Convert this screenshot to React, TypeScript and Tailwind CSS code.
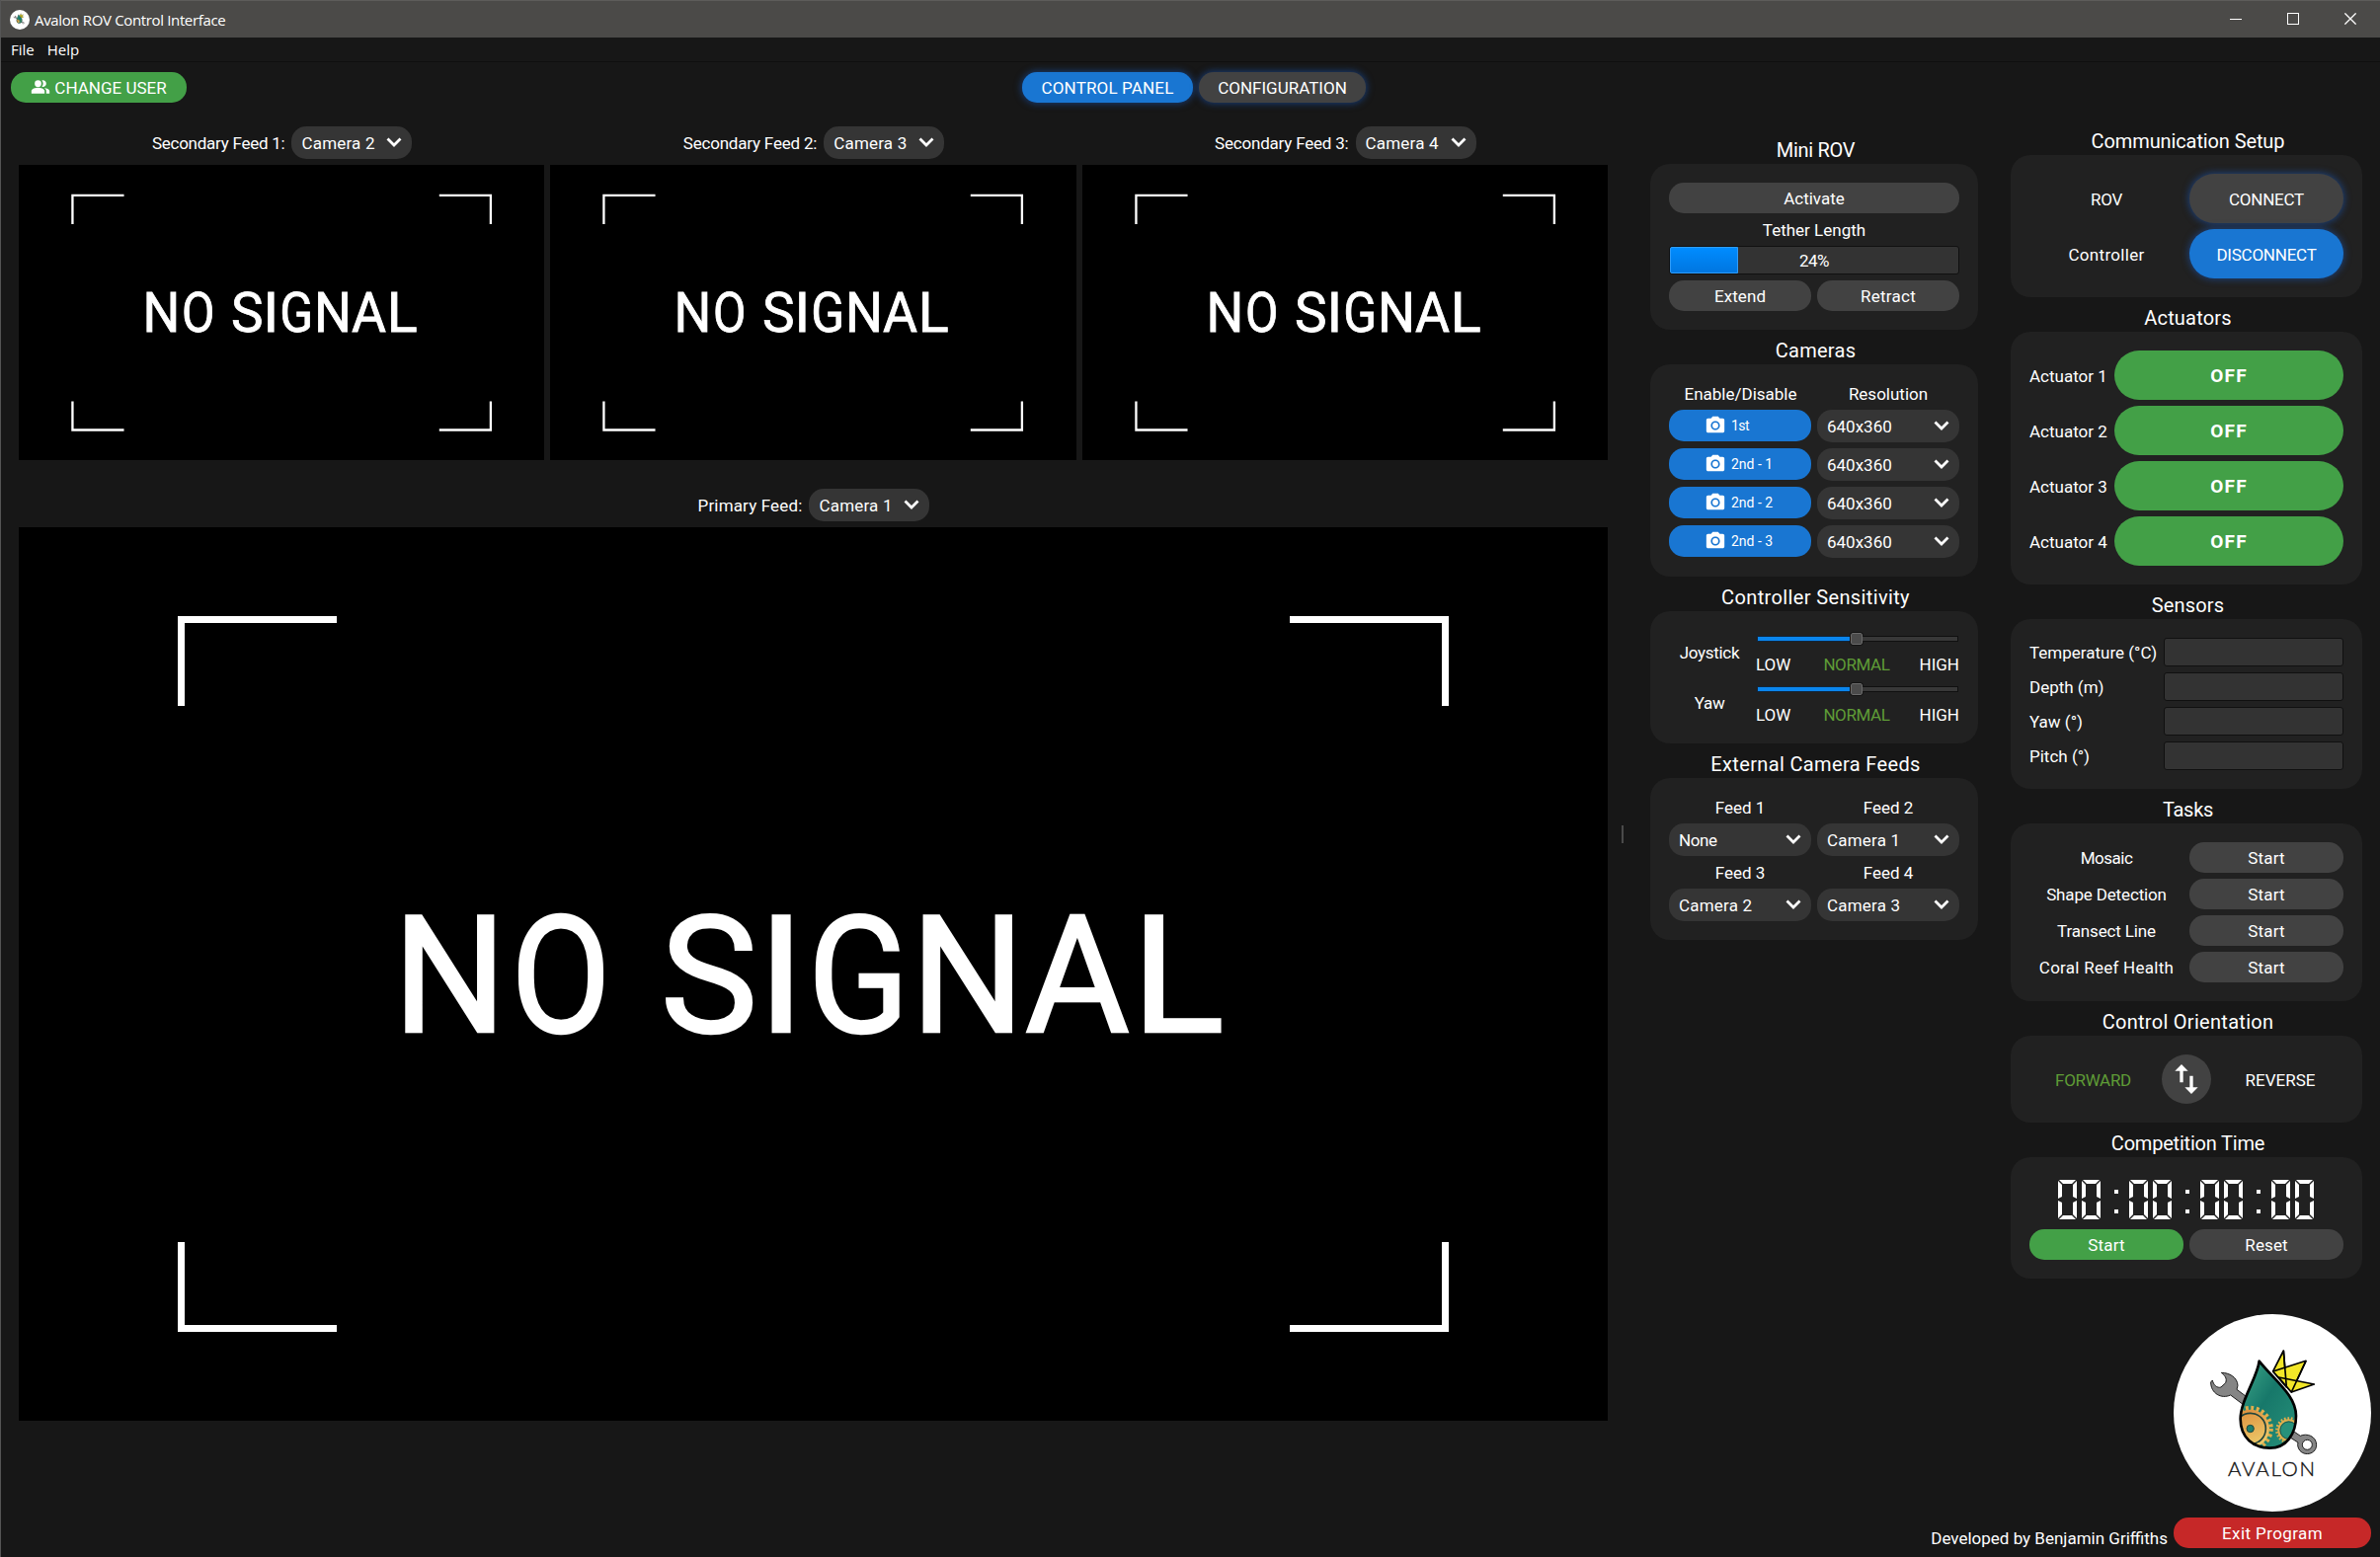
import React from "react";
import clsx from "clsx";
import { MdImportExport, MdPeopleAlt, MdPhotoCamera } from "react-icons/md";

function Emblem({ className, caption }: { className: string; caption?: boolean }) {
  return (
    <svg viewBox="0 0 200 200" className={className} aria-label="Avalon">
      <circle cx="100" cy="100" r="100" fill="#fff" />
      <defs>
        <clipPath id={caption ? "drop-lg" : "drop-sm"}>
          <path d="M203 86 C198 135 146 205 146 262 C146 318 185 350 235 350 C285 350 315 308 315 252 C315 190 250 145 203 86 Z" />
        </clipPath>
        <linearGradient id="teal" x1="0" y1="0" x2="1" y2="1">
          <stop offset="0" stopColor="#3fa88a" />
          <stop offset="0.45" stopColor="#17786a" />
          <stop offset="1" stopColor="#27917a" />
        </linearGradient>
        <linearGradient id="brass" x1="0" y1="0" x2="0.4" y2="1">
          <stop offset="0" stopColor="#dd8a3a" />
          <stop offset="1" stopColor="#ecc768" />
        </linearGradient>
      </defs>
      <g transform="translate(19 19) scale(0.3333)">
        <g fill="#858585" stroke="#1c1c1c" strokeWidth="3" strokeLinejoin="round">
          <path d="M88 121 C112 121 137 135 138 160 L135 172 L175 202 L160 222 L116 189 C88 202 56 184 56 150 L61 144 C64 158 75 169 87 165 L101 152 C106 138 99 130 88 121 Z" />
          <path d="M300 294 L328 313 C347 304 377 313 377 341 C376 375 324 378 320 341 L321 333 L294 316 Z" />
          <circle cx="349" cy="340" r="15" fill="#fff" />
        </g>
        <path
          d="M203 86 C198 135 146 205 146 262 C146 318 185 350 235 350 C285 350 315 308 315 252 C315 190 250 145 203 86 Z"
          fill="url(#teal)"
        />
        <g clipPath={caption ? "url(#drop-lg)" : "url(#drop-sm)"}>
          <circle cx="176" cy="291" r="63" fill="none" stroke="#e0ae4c" strokeWidth="13" strokeDasharray="8.5 8" />
          <circle cx="176" cy="291" r="58" fill="url(#brass)" />
          <circle cx="176" cy="291" r="47" fill="none" stroke="#22443c" strokeWidth="5" />
          <circle cx="176" cy="291" r="11" fill="#1d7f6e" stroke="#22443c" strokeWidth="3" />
          <circle cx="293" cy="296" r="36" fill="none" stroke="#e0ae4c" strokeWidth="9" strokeDasharray="5 5.3" />
          <circle cx="293" cy="296" r="31" fill="none" stroke="#e0ae4c" strokeWidth="6" />
          <circle cx="293" cy="296" r="26" fill="#27917a" stroke="#22443c" strokeWidth="2" />
        </g>
        <path
          d="M203 86 C198 135 146 205 146 262 C146 318 185 350 235 350 C285 350 315 308 315 252 C315 190 250 145 203 86 Z"
          fill="none"
          stroke="#000"
          strokeWidth="8"
          strokeLinejoin="round"
        />
        <g fill="#f2e628" stroke="#000" strokeWidth="5" strokeLinejoin="round">
          <path d="M245 117 L277 54 L286 165 Z" />
          <path d="M245 117 L345 85 L301 180 Z" />
          <path d="M262 135 L370 156 L301 180 Z" />
          <path d="M277 54 L286 165" />
          <path d="M345 85 L301 180" />
        </g>
      </g>
      {caption && (
        <text
          x="55"
          y="163.8"
          textLength="88"
          fontSize="20.5"
          fill="#111"
          stroke="#111"
          strokeWidth="0.35"
          className="font-['Lato'] font-light"
        >
          AVALON
        </text>
      )}
    </svg>
  );
}

/** Idle frame shown while a camera has no stream. */
function NoSignal() {
  return (
    <svg viewBox="0 0 1609 905" className="block w-full bg-black">
      <g fill="none" stroke="#fff" strokeWidth="7">
        <path d="M322 93.5 H164.5 V181" />
        <path d="M1287 93.5 H1444.5 V181" />
        <path d="M322 811.5 H164.5 V724" />
        <path d="M1287 811.5 H1444.5 V724" />
      </g>
      <g fill="#fff" stroke="#fff" strokeWidth="2.4" fontSize="166" className="font-['Roboto']">
        <text y="511.2">
          <tspan x="379.2" textLength="114.4" lengthAdjust="spacingAndGlyphs">N</tspan>
          <tspan x="498.4" textLength="100.9" lengthAdjust="spacingAndGlyphs">O</tspan>{" "}
          <tspan x="649.8" textLength="98.4" lengthAdjust="spacingAndGlyphs">S</tspan>
          <tspan x="748.2" textLength="47.5" lengthAdjust="spacingAndGlyphs">I</tspan>
          <tspan x="799" textLength="102.6" lengthAdjust="spacingAndGlyphs">G</tspan>
          <tspan x="903.4" textLength="114.8" lengthAdjust="spacingAndGlyphs">N</tspan>
          <tspan x="1019" textLength="105.8" lengthAdjust="spacingAndGlyphs">A</tspan>
          <tspan x="1127" textLength="93.6" lengthAdjust="spacingAndGlyphs">L</tspan>
        </text>
      </g>
    </svg>
  );
}

function Combo({ value, className }: { value: string; className?: string }) {
  return (
    <button
      className={clsx(
        "flex h-[33px] items-center justify-between rounded-[15px] bg-[#353535] pr-[10px] pl-[10px] text-left",
        className,
      )}
    >
      <span>{value}</span>
      <svg viewBox="0 0 16 10" className="-mt-px h-[10px] w-[16px]" fill="none" stroke="#fff" strokeWidth="2.8">
        <path d="M1.5 1.5 L8 8 L14.5 1.5" />
      </svg>
    </button>
  );
}

function Pill({ children, className }: { children: React.ReactNode; className?: string }) {
  return (
    <button className={clsx("flex h-[31px] items-center justify-center rounded-[15px]", className)}>{children}</button>
  );
}

function Label({ children, className }: { children: React.ReactNode; className?: string }) {
  return <div className={clsx("flex h-[21px] items-center justify-center", className)}>{children}</div>;
}

function Section({
  title,
  tracking,
  className,
  children,
}: {
  title: string;
  tracking?: string;
  className?: string;
  children: React.ReactNode;
}) {
  return (
    <section>
      <h2 className={clsx("flex h-[35px] items-center justify-center pt-[7px] pl-[3px] text-[20px]", tracking)}>{title}</h2>
      <div className={clsx("rounded-[20px] bg-[#212121] p-[19px]", className)}>{children}</div>
    </section>
  );
}

function Feed({ label, value, tracking }: { label: string; value: string; tracking?: string }) {
  return (
    <div>
      <div className="mb-[6px] flex items-center justify-center gap-[7px] pl-px">
        <span className={tracking}>{label}</span>
        <Combo value={value} className="w-[122px] tracking-[0.2px]" />
      </div>
      <NoSignal />
    </div>
  );
}

function Sensitivity({ name }: { name: string }) {
  return (
    <div className="grid grid-cols-[83px_205px] gap-x-[6px]">
      <div className="flex items-center justify-center pt-px pr-px tracking-[-0.3px]">{name}</div>
      <div>
        <div className="mb-[6px] flex h-[18px] items-center">
          <div className="h-[6px] w-[95px] rounded-[1px] border border-r-0 border-[#10263c] bg-[#0a86ee]" />
          <div className="h-[12px] w-[12px] rounded-[2px] border border-[#6a6a6a] bg-[#4b4b4b] outline outline-[#141414]" />
          <div className="h-[6px] w-[97px] rounded-[1px] border border-l-0 border-[#101010] bg-[#383838]" />
        </div>
        <div className="-ml-px flex h-[21px] items-center justify-between">
          <span>LOW</span>
          <span className="ml-[3px] tracking-[-0.4px] text-[#5f9c36]">NORMAL</span>
          <span>HIGH</span>
        </div>
      </div>
    </div>
  );
}

function Digit() {
  const seg = "absolute bg-white ";
  return (
    <span className="relative block h-[40px] w-[19px]">
      <i className={seg + "top-0 left-[1px] h-[4px] w-[17px] [clip-path:polygon(0_0,100%_0,calc(100%-4px)_100%,4px_100%)]"} />
      <i className={seg + "top-[1px] left-0 h-[18px] w-[4px] [clip-path:polygon(0_0,100%_4px,100%_calc(100%-2px),0_100%)]"} />
      <i className={seg + "top-[1px] right-0 h-[18px] w-[4px] [clip-path:polygon(100%_0,0_4px,0_calc(100%-2px),100%_100%)]"} />
      <i className={seg + "bottom-[1px] left-0 h-[18px] w-[4px] [clip-path:polygon(0_0,100%_2px,100%_calc(100%-4px),0_100%)]"} />
      <i className={seg + "right-0 bottom-[1px] h-[18px] w-[4px] [clip-path:polygon(100%_0,0_2px,0_calc(100%-4px),100%_100%)]"} />
      <i className={seg + "bottom-0 left-[1px] h-[4px] w-[17px] [clip-path:polygon(4px_0,calc(100%-4px)_0,100%_100%,0_100%)]"} />
    </span>
  );
}

function Clock() {
  return (
    <div role="timer" aria-label="00:00:00:00" className="mb-[6px] flex h-[48px] items-center pl-[29px]">
      {[0, 1, 2, 3].map((group) => (
        <React.Fragment key={group}>
          {group > 0 && (
            <span className="mr-[11px] ml-[14px] flex h-[40px] w-[4px] flex-col pt-[10px]">
              <i className="mb-[16px] h-[4px] bg-white" />
              <i className="h-[4px] bg-white" />
            </span>
          )}
          <span className="flex gap-[5px]">
            <Digit />
            <Digit />
          </span>
        </React.Fragment>
      ))}
    </div>
  );
}

const glow = "shadow-[0_0_7px_1px_rgba(25,90,190,0.55)]";

const cameras = ["1st", "2nd - 1", "2nd - 2", "2nd - 3"];
const actuators = ["Actuator 1", "Actuator 2", "Actuator 3", "Actuator 4"];
const sensors = ["Temperature (°C)", "Depth (m)", "Yaw (°)", "Pitch (°)"];
const tasks = [
  { name: "Mosaic", tracking: "tracking-[-0.5px]" },
  { name: "Shape Detection", tracking: "tracking-[-0.15px]" },
  { name: "Transect Line", tracking: "tracking-[-0.15px]" },
  { name: "Coral Reef Health", tracking: "tracking-[0.26px]" },
];

export default function App() {
  return (
    <div className="flex h-[1577px] w-[2410px] flex-col overflow-hidden border-l border-[#555] bg-[#171717] font-['Roboto',sans-serif] text-[17px] leading-[20px] whitespace-nowrap text-white">
      <header className="flex h-[38px] shrink-0 items-center border-t border-[#5d5c5a] bg-[#4b4a48] pl-[9px] font-['Open_Sans',sans-serif] text-[15px]">
        <Emblem className="h-[20px] w-[20px]" />
        <span className="ml-[5px] flex-1 tracking-[-0.35px]">Avalon ROV Control Interface</span>
        <div className="mb-px flex items-center gap-[46px] pr-[24px]">
          <span className="h-px w-[12px] bg-white" />
          <span className="h-[12px] w-[12px] border border-white" />
          <svg viewBox="0 0 12 12" className="h-[12px] w-[12px]" stroke="#fff" strokeWidth="1.3">
            <path d="M0.4 0.4 L11.6 11.6 M11.6 0.4 L0.4 11.6" />
          </svg>
        </div>
      </header>

      <nav className="flex h-[25px] shrink-0 items-center gap-[13px] border-b border-[#0f0f0f] pl-[10px] font-['Open_Sans',sans-serif] text-[15px]">
        <span>File</span>
        <span>Help</span>
      </nav>

      <div className="grid shrink-0 grid-cols-[1fr_auto_1fr] pt-[10px] pr-[3px] pl-[10px]">
        <Pill className="w-[178px] gap-[4px] bg-[#43a047]">
          <MdPeopleAlt size={20} className="-mt-px" />
          <span>CHANGE USER</span>
        </Pill>
        <div className="flex gap-[6px]">
          <Pill className={clsx("w-[173px] bg-[#1976d2] tracking-[0.15px]", glow)}>CONTROL PANEL</Pill>
          <Pill className={clsx("w-[169px] bg-[#424242]", glow)}>CONFIGURATION</Pill>
        </div>
      </div>

      <main className="flex min-h-0 flex-1">
        <div className="w-[1627px] shrink-0 pt-[24px] pl-[18px]">
          <div className="mb-[29px] grid grid-cols-3 gap-[6px]">
            <Feed label="Secondary Feed 1:" value="Camera 2" tracking="tracking-[-0.25px]" />
            <Feed label="Secondary Feed 2:" value="Camera 3" tracking="tracking-[-0.2px]" />
            <Feed label="Secondary Feed 3:" value="Camera 4" tracking="tracking-[-0.2px]" />
          </div>
          <Feed label="Primary Feed:" value="Camera 1" tracking="tracking-[0.15px]" />
        </div>

        <div className="flex w-[43px] shrink-0 pt-[732px] pl-[14px]">
          <span className="h-[18px] w-[2px] bg-[#4a4a4a]" />
        </div>

        <div className="flex flex-1 flex-col justify-between pr-[9px] pb-[9px]">
          <div className="flex gap-[33px]">
            <div className="w-[332px] pt-[27px]">
              <Section title="Mini ROV" tracking="tracking-[-0.3px]" className="grid grid-cols-2 gap-[6px]">
                <Pill className="col-span-2 bg-[#424242]">Activate</Pill>
                <Label className="col-span-2">Tether Length</Label>
                <div className="relative col-span-2 h-[29px] rounded-[3px] border border-[#101010] bg-[#333]">
                  <div className="h-full w-[69px] rounded-l-[2px] border border-[#2f9cf8] bg-linear-to-b from-[#008cff] to-[#0076e0]" />
                  <div className="absolute inset-0 flex items-center justify-center tracking-[-0.5px]">24%</div>
                </div>
                <Pill className="bg-[#424242] tracking-[0.1px]">Extend</Pill>
                <Pill className="bg-[#424242] tracking-[0.28px]">Retract</Pill>
              </Section>

              <Section title="Cameras" tracking="tracking-[0.28px]" className="grid grid-cols-2 gap-[6px]">
                <Label className="pl-px">Enable/Disable</Label>
                <Label>Resolution</Label>
                {cameras.map((name) => (
                  <React.Fragment key={name}>
                    <button
                      className={clsx(
                        "flex h-[32px] items-center gap-[5px] rounded-[15px] bg-[#1976d2] pl-[36px] text-[14px]",
                        name === "1st" && "tracking-[-0.6px]",
                      )}
                    >
                      <MdPhotoCamera size={22} />
                      <span>{name}</span>
                    </button>
                    <Combo value="640x360" />
                  </React.Fragment>
                ))}
              </Section>

              <Section title="Controller Sensitivity" tracking="tracking-[0.37px]" className="flex flex-col gap-[6px]">
                <Sensitivity name="Joystick" />
                <Sensitivity name="Yaw" />
              </Section>

              <Section title="External Camera Feeds" tracking="tracking-[0.36px]" className="grid grid-cols-2 gap-[6px]">
                <Label>Feed 1</Label>
                <Label>Feed 2</Label>
                <Combo value="None" className="tracking-[-0.4px]" />
                <Combo value="Camera 1" className="tracking-[0.2px]" />
                <Label>Feed 3</Label>
                <Label>Feed 4</Label>
                <Combo value="Camera 2" className="tracking-[0.2px]" />
                <Combo value="Camera 3" className="tracking-[0.2px]" />
              </Section>
            </div>

            <div className="w-[356px] pt-[18px]">
              <Section
                title="Communication Setup"
                tracking="tracking-[-0.11px]"
                className="grid grid-cols-2 items-center gap-[6px]"
              >
                <Label className="pt-[2px] tracking-[-0.3px]">ROV</Label>
                <button className={clsx("h-[50px] rounded-[25px] bg-[#424242] pt-[2px] tracking-[-0.25px]", glow)}>
                  CONNECT
                </button>
                <Label className="pt-[2px] tracking-[0.3px]">Controller</Label>
                <button className={clsx("relative h-[50px] rounded-[25px] bg-[#1976d2] pt-[2px] tracking-[-0.23px]", glow)}>
                  DISCONNECT
                </button>
              </Section>

              <Section
                title="Actuators"
                tracking="tracking-[0.19px]"
                className="grid grid-cols-[80px_232px] items-center gap-[6px]"
              >
                {actuators.map((name) => (
                  <React.Fragment key={name}>
                    <span className="pt-[2px]">{name}</span>
                    <button className="h-[50px] rounded-[25px] bg-[#43a047] pt-[2px] text-[19px] font-bold tracking-[1.2px]">
                      OFF
                    </button>
                  </React.Fragment>
                ))}
              </Section>

              <Section
                title="Sensors"
                tracking="tracking-[0.16px]"
                className="grid grid-cols-[130px_182px] items-center gap-[6px]"
              >
                {sensors.map((name) => (
                  <React.Fragment key={name}>
                    <span>{name}</span>
                    <div className="h-[29px] rounded-[3px] border border-[#101010] bg-[#333]" />
                  </React.Fragment>
                ))}
              </Section>

              <Section title="Tasks" tracking="tracking-[-0.29px]" className="grid grid-cols-2 items-center gap-[6px]">
                {tasks.map((task) => (
                  <React.Fragment key={task.name}>
                    <Label className={task.tracking}>{task.name}</Label>
                    <Pill className="bg-[#424242] tracking-[0.16px]">Start</Pill>
                  </React.Fragment>
                ))}
              </Section>

              <Section
                title="Control Orientation"
                tracking="tracking-[0.29px]"
                className="grid grid-cols-[1fr_50px_1fr] items-center gap-[6px]"
              >
                <Label className="pt-[2px] pl-px tracking-[-0.31px] text-[#5f9c36]">FORWARD</Label>
                <button className="flex h-[50px] items-center justify-center rounded-full bg-[#424242]">
                  <MdImportExport size={40} />
                </button>
                <Label className="pt-[2px]">REVERSE</Label>
              </Section>

              <Section title="Competition Time" tracking="tracking-[-0.2px]">
                <Clock />
                <div className="grid grid-cols-2 gap-[6px]">
                  <Pill className="bg-[#43a047] tracking-[0.16px]">Start</Pill>
                  <Pill className="bg-[#424242] tracking-[0.1px]">Reset</Pill>
                </div>
              </Section>
            </div>
          </div>

          <footer className="flex items-end justify-end gap-[6px]">
            <span>Developed by Benjamin Griffiths</span>
            <div className="flex flex-col gap-[6px]">
              <Emblem className="h-[200px] w-[200px]" caption />
              <Pill className="bg-[#c62828] tracking-[0.4px]">Exit Program</Pill>
            </div>
          </footer>
        </div>
      </main>
    </div>
  );
}
